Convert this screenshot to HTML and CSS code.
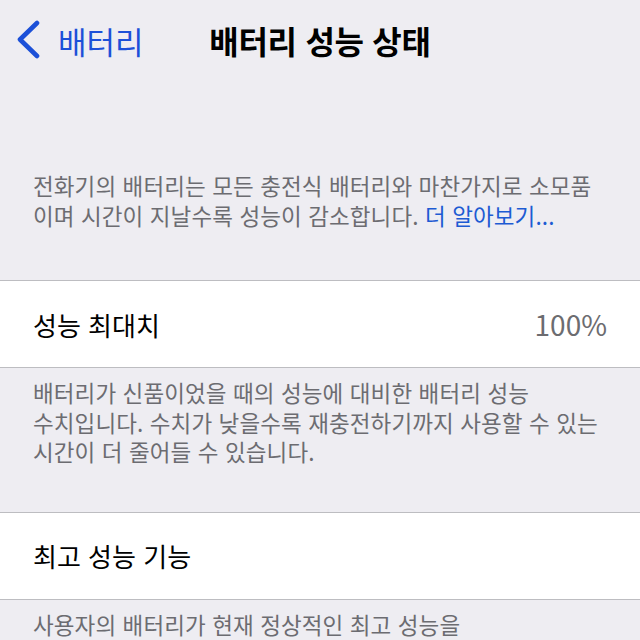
FILE: index.html
```html
<!DOCTYPE html>
<html lang="ko">
<head>
<meta charset="utf-8">
<title>배터리 성능 상태</title>
<link rel="stylesheet" href="styles.css">
</head>
<body>
<div class="screen">
  <header class="nav">
    <a class="back">
      <svg class="chevron" width="26" height="40" viewBox="0 0 26 40"><polyline points="21,3 4,19.5 21,36" fill="none" stroke="currentColor" stroke-width="4.6" stroke-linecap="round" stroke-linejoin="round"/></svg>
      <span class="back-label">배터리</span>
    </a>
    <h1 class="title">배터리 성능 상태</h1>
    <span class="spacer"></span>
  </header>

  <p class="intro">전화기의 배터리는 모든 충전식 배터리와 마찬가지로 소모품<br>이며 시간이 지날수록 성능이 감소합니다. <span class="link">더 알아보기...</span></p>

  <div class="cell">
    <span class="cell-label">성능 최대치</span>
    <span class="cell-value">100%</span>
  </div>
  <p class="footer">배터리가 신품이었을 때의 성능에 대비한 배터리 성능<br>수치입니다. 수치가 낮을수록 재충전하기까지 사용할 수 있는<br>시간이 더 줄어들 수 있습니다.</p>

  <div class="cell">
    <span class="cell-label">최고 성능 기능</span>
  </div>
  <p class="footer">사용자의 배터리가 현재 정상적인 최고 성능을</p>
</div>
</body>
</html>
```

FILE: styles.css
```css
html, body {
  margin: 0;
  padding: 0;
  background: #eeedf2;
}
body {
  font-family: "Noto Sans CJK KR", "Noto Sans", sans-serif;
  overflow: hidden;
}
.screen {
  width: 640px;
  height: 640px;
  overflow: hidden;
  background: #eeedf2;
}
.nav {
  height: 84px;
  display: grid;
  grid-template-columns: 1fr auto 1fr;
  align-items: center;
}
.back {
  display: flex;
  align-items: center;
  color: #1c50d8;
  padding-left: 16px;
}
.chevron {
  display: block;
  margin-top: -5px;
}
.back-label {
  font-size: 31px;
  letter-spacing: 0;
  margin-left: 16px;
  line-height: 1;
  margin-top: -4px;
}
.title {
  margin: -5px 0 0;
  font-size: 32px;
  font-weight: 700;
  letter-spacing: -0.3px;
  color: #000;
  line-height: 1;
}
.intro {
  margin: 0;
  padding: 87px 10px 50px 33px;
  font-size: 22.5px;
  line-height: 29.5px;
  letter-spacing: 0.1px;
  color: #6c6c71;
}
.link {
  color: #1d5bd3;
}
.cell {
  height: 86px;
  background: #fff;
  border-top: 1px solid #bdbdc1;
  border-bottom: 1px solid #bdbdc1;
  display: flex;
  align-items: center;
  justify-content: space-between;
  padding: 0 33px;
}
.cell-label {
  font-size: 26px;
  letter-spacing: 0;
  color: #000;
}
.cell-value {
  font-size: 28px;
  color: #6c6c70;
  letter-spacing: 0;
}
.footer {
  margin: 0;
  padding: 10px 10px 45px 33px;
  font-size: 22.5px;
  line-height: 29.5px;
  letter-spacing: 0.1px;
  color: #6c6c71;
}
```
